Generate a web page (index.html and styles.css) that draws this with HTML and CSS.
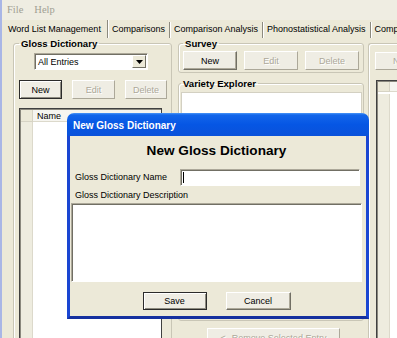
FILE: index.html
```html
<!DOCTYPE html>
<html lang="en">
<head>
  <meta charset="UTF-8">
  <title>Word List Management</title>
  <link rel="stylesheet" href="styles.css">
</head>
<body>
  <div class="app">
    <div class="menubar"><span>File</span><span>Help</span></div>

    <div class="tabs">
      <div class="tab active">Word List Management</div>
      <div class="tab">Comparisons</div>
      <div class="tab">Comparison Analysis</div>
      <div class="tab">Phonostatistical Analysis</div>
      <div class="tab">Comparison Results</div>
    </div>

    <div class="panel">
      <fieldset class="group gloss">
        <legend>Gloss Dictionary</legend>
        <div class="combo">
          <span class="combo-text">All Entries</span>
          <span class="combo-btn">
            <svg width="7" height="4" viewBox="0 0 7 4"><path d="M0 0h7L3.5 4z" fill="#000"/></svg>
          </span>
        </div>
        <div class="btn-row">
          <button class="btn default w43">New</button>
          <button class="btn w43" disabled>Edit</button>
          <button class="btn w42" disabled>Delete</button>
        </div>
        <div class="list gloss-list">
          <div class="corner"></div>
          <div class="colhead">Name</div>
          <div class="rowhead"></div>
          <div class="cells"></div>
        </div>
      </fieldset>

      <div class="middle">
        <fieldset class="group survey">
          <legend>Survey</legend>
          <div class="btn-row">
            <button class="btn w54">New</button>
            <button class="btn w54" disabled>Edit</button>
            <button class="btn w54" disabled>Delete</button>
          </div>
        </fieldset>
        <fieldset class="group variety">
          <legend>Variety Explorer</legend>
          <div class="tree"></div>
        </fieldset>
        <button class="btn remove" disabled>&lt;--Remove Selected Entry</button>
      </div>

      <div class="right">
        <button class="btn w54" disabled>New</button>
        <div class="list right-list">
          <div class="corner"></div>
          <div class="colhead"></div>
          <div class="rowhead"></div>
          <div class="cells"></div>
        </div>
      </div>
    </div>

    <div class="dialog">
      <div class="dialog-title">New Gloss Dictionary</div>
      <div class="dialog-body">
        <div class="dialog-heading">New Gloss Dictionary</div>
        <div class="field-row">
          <span class="field-label">Gloss Dictionary Name</span>
          <div class="textbox"><span class="caret"></span></div>
        </div>
        <div class="field-label desc-label">Gloss Dictionary Description</div>
        <div class="textarea"></div>
        <div class="dialog-buttons">
          <button class="btn default save">Save</button>
          <button class="btn cancel">Cancel</button>
        </div>
      </div>
    </div>
  </div>
</body>
</html>
```

FILE: styles.css
```css
* {
  box-sizing: border-box;
}

body {
  margin: 0;
  width: 397px;
  height: 338px;
  overflow: hidden;
  background: #ece9d8;
  font-family: "Liberation Sans", Arial, sans-serif;
  font-size: 9px;
  color: #000;
}

.app {
  position: relative;
  height: 338px;
  border-left: 2px solid #a9b6e6;
  overflow: hidden;
}

.menubar {
  display: flex;
  gap: 11px;
  height: 20px;
  padding-left: 5px;
  line-height: 20px;
  font-family: "Liberation Serif", "Times New Roman", serif;
  font-size: 10.5px;
  color: #a19f93;
  background: #efede2;
}

.tabs {
  display: flex;
  align-items: flex-end;
  height: 18px;
  white-space: nowrap;
}

.tab {
  flex: none;
  height: 16px;
  padding: 0 4px;
  line-height: 14px;
  border-right: 1px solid #8c8a7e;
  box-shadow: 1px 0 0 #fff;
}

.tab.active {
  height: 18px;
  padding: 0 6px;
  line-height: 18px;
}

.panel {
  display: flex;
  align-items: flex-start;
  height: 300px;
}

.group {
  flex: none;
  margin: 0;
  min-width: 0;
  border: 1px solid #c9c6b6;
  border-radius: 3px;
  box-shadow: inset 1px 1px 0 #fff;
}

.group legend {
  padding: 0 2px;
  font-size: 9.6px;
  font-weight: bold;
  line-height: 11px;
}

.gloss {
  margin-left: 11px;
  width: 159px;
  height: 330px;
  padding: 4px 4px 0 5px;
}

.combo {
  display: flex;
  align-items: center;
  margin-left: 15px;
  width: 114px;
  height: 17px;
  padding: 1px 1px 1px 3px;
  background: #fff;
  border: 1px solid;
  border-color: #aca899 #fff #fff #aca899;
  box-shadow: inset 1px 1px 0 #716f64;
}

.combo-text {
  flex: 1;
}

.combo-btn {
  display: flex;
  align-items: center;
  justify-content: center;
  width: 14px;
  height: 13px;
  background: #ece9d8;
  border: 1px solid;
  border-color: #fff #716f64 #716f64 #fff;
}

.btn-row {
  display: flex;
  gap: 10px;
  margin-top: 10px;
}

.btn {
  flex: none;
  height: 19px;
  padding: 0;
  font-family: inherit;
  font-size: 9px;
  color: #000;
  background: #efede4;
  border: 1px solid;
  border-color: #fff #716f64 #716f64 #fff;
  box-shadow: inset -1px -1px 0 #aca899;
  white-space: nowrap;
}

.btn.default {
  border-color: #2b2b2b;
  box-shadow: inset 1px 1px 0 #fff, inset -1px -1px 0 #8d8b80;
}

.btn:disabled {
  color: #aca899;
  text-shadow: 1px 1px 0 #fff;
  border-color: #fff #aca899 #aca899 #fff;
  box-shadow: none;
}

.w42 { width: 42px; }
.w43 { width: 43px; }
.w54 { width: 54px; }

.list {
  display: grid;
  grid-template-columns: 12px 1fr;
  grid-template-rows: 12px 1fr;
  padding: 1px 0 0 1px;
  background: #fff;
  border: 1px solid #404040;
  box-shadow: inset 1px 1px 0 #8a887d;
}

.gloss-list {
  margin-top: 9px;
  width: 143px;
  height: 240px;
}

.corner {
  background: #ece9d8;
  border-right: 1px solid #d6d3c4;
  border-bottom: 1px solid #d6d3c4;
}

.colhead {
  padding-left: 4px;
  line-height: 12px;
  background: #f6f5f0;
  border-bottom: 1px solid #dcd9cb;
}

.rowhead {
  background: #eeecdf;
  border-right: 1px solid #dcd9cb;
}

.cells {
  background: #fff;
}

.middle {
  flex: none;
  display: flex;
  flex-direction: column;
  margin-left: 6px;
  width: 186px;
}

.survey {
  padding: 2px 4px;
}

.survey .btn-row {
  gap: 7px;
  margin-top: 0;
}

.variety {
  margin-top: 5px;
  padding: 3px 1px 2px 2px;
}

.tree {
  height: 226px;
  background: #fff;
  border: 1px solid #d3d0c2;
}

.remove {
  margin-top: 7px;
  margin-left: 29px;
  width: 133px;
}

.right {
  flex: none;
  margin: 5px 0 0 4px;
  width: 120px;
  height: 320px;
  padding: 8px 0 0 6px;
  border: 1px solid #c9c6b6;
  border-right: none;
  border-radius: 3px 0 0 0;
  box-shadow: inset 1px 1px 0 #fff;
}

.right .btn {
  height: 18px;
}

.right-list {
  margin: 10px 0 0 1px;
  height: 260px;
}

.right-list .corner,
.right-list .colhead {
  height: 10px;
}

.dialog {
  position: absolute;
  left: 65px;
  top: 113px;
  display: flex;
  flex-direction: column;
  width: 302px;
  height: 206px;
}

.dialog-title {
  height: 23px;
  padding: 6px 0 0 6px;
  line-height: 14px;
  font-size: 10px;
  font-weight: bold;
  color: #fff;
  border-radius: 7px 7px 0 0;
  background: linear-gradient(#4a96f8 0, #1366ea 2px, #0656e4 50%, #0a52da 100%);
}

.dialog-body {
  flex: 1;
  display: flex;
  flex-direction: column;
  padding: 6px 4px 6px 1px;
  background: #ece9d8;
  border: 3px solid #1a46d2;
  border-top: none;
  border-bottom-color: #15309f;
}

.dialog-heading {
  height: 17px;
  line-height: 17px;
  font-size: 13.6px;
  font-weight: bold;
  text-align: center;
}

.field-row {
  display: flex;
  align-items: center;
  height: 17px;
  margin-top: 10px;
}

.field-label {
  margin-left: 4px;
  line-height: 11px;
}

.textbox {
  display: flex;
  align-items: center;
  margin: 0 2px 0 auto;
  width: 180px;
  height: 17px;
  padding-left: 2px;
  background: #fff;
  border: 1px solid;
  border-color: #aca899 #fff #fff #aca899;
  box-shadow: inset 1px 1px 0 #716f64;
}

.caret {
  width: 1px;
  height: 11px;
  background: #000;
}

.desc-label {
  margin-top: 4px;
}

.textarea {
  height: 79px;
  margin-top: 2px;
  background: #fff;
  border: 1px solid;
  border-color: #aca899 #fff #fff #aca899;
  box-shadow: inset 1px 1px 0 #716f64;
}

.dialog-buttons {
  display: flex;
  justify-content: center;
  gap: 19px;
  margin-top: 10px;
}

.dialog-buttons .btn {
  height: 18px;
}

.save { width: 64px; }
.cancel { width: 65px; }
```
